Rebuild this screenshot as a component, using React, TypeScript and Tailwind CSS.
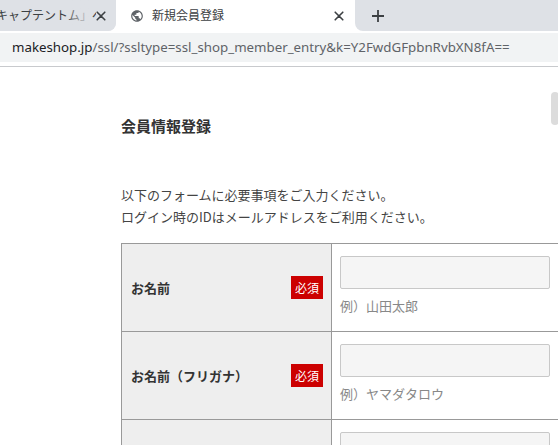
import React from 'react';

const rows = [
  { label: 'お名前', example: '例）山田太郎' },
  { label: 'お名前（フリガナ）', example: '例）ヤマダタロウ' },
];

const CloseIcon = () => (
  <svg width="10" height="10" viewBox="0 0 10 10" className="text-[#3c4043]">
    <path d="M1.2 1.2 L8.8 8.8 M8.8 1.2 L1.2 8.8" stroke="currentColor" strokeWidth="1.6" strokeLinecap="round" />
  </svg>
);

const GlobeIcon = () => (
  <svg width="14" height="14" viewBox="0 0 24 24">
    <path
      fill="#5f6368"
      d="M12 2C6.48 2 2 6.48 2 12s4.48 10 10 10 10-4.48 10-10S17.52 2 12 2zm-1 17.930c-3.950-.49-7-3.850-7-7.930 0-.62.08-1.210.21-1.790L9 15v1c0 1.100.9 2 2 2v1.930zm6.900-2.540c-.26-.81-1-1.390-1.900-1.390h-1v-3c0-.55-.45-1-1-1H8v-2h2c.55 0 1-.45 1-1V7h2c1.100 0 2-.9 2-2v-.41c2.930 1.190 5 4.060 5 7.410 0 2.080-.8 3.970-2.100 5.390z"
    />
  </svg>
);

export default function App() {
  return (
    <div className="relative w-[558px] h-[445px] overflow-hidden bg-white font-['Noto_Sans','Noto_Sans_CJK_JP',sans-serif]">
      {/* tab strip */}
      <div className="flex h-[31px] bg-white">
        <div className="relative w-[116px] bg-[#dee1e6] rounded-br-lg flex items-center overflow-hidden">
          <span className="ml-[-4px] whitespace-nowrap text-[12px] text-[#3c4043]">キャプテントム」への</span>
          <div className="absolute left-[64px] top-0 h-full w-[28px] bg-gradient-to-r from-transparent to-[#dee1e6]" />
          <div className="absolute left-[96px] top-0 h-full w-[20px] bg-[#dee1e6] rounded-br-lg flex items-center">
            <CloseIcon />
          </div>
        </div>
        <div className="w-[239px] flex items-center pl-[14px] pr-[11px]">
          <GlobeIcon />
          <span className="ml-[8px] flex-1 text-[12px] text-[#3c4043] whitespace-nowrap">新規会員登録</span>
          <CloseIcon />
        </div>
        <div className="flex-1 bg-[#dee1e6] rounded-bl-lg flex items-center pl-[16px]">
          <svg width="14" height="14" viewBox="0 0 14 14">
            <path d="M7 1 V13 M1 7 H13" stroke="#3c4043" strokeWidth="1.8" />
          </svg>
        </div>
      </div>

      {/* toolbar */}
      <div className="h-[36px] pt-[2px] border-b border-[#c8cacd]">
        <div className="h-[29px] bg-[#f1f3f4] flex items-center pl-[12px] text-[13.3px] whitespace-nowrap">
          <span className="text-[#202124]">makeshop.jp</span>
          <span className="text-[#5f6368]">/ssl/?ssltype=ssl_shop_member_entry&amp;k=Y2FwdGFpbnRvbXN8fA==</span>
        </div>
      </div>

      {/* scrollbar thumb */}
      <div className="absolute left-[551px] top-[92px] w-[8px] h-[33px] rounded-[4px] bg-[#dcdcdc]" />

      {/* page */}
      <div className="pl-[121px] pt-[48px] text-[#333] font-['Noto_Sans_CJK_JP','Noto_Sans',sans-serif]">
        <h1 className="text-[15px] leading-[22px] font-bold text-[#333]">会員情報登録</h1>

        <p className="mt-[47px] text-[13px] leading-[22px] text-[#444]">
          以下のフォームに必要事項をご入力ください。
          <br />
          ログイン時のIDはメールアドレスをご利用ください。
        </p>

        <div className="mt-[15px] w-[600px] border-t border-l border-[#999]">
          {rows.map((row) => (
            <div key={row.label} className="grid grid-cols-[210px_1fr] border-b border-[#999]">
              <div className="bg-[#eeeeee] border-r border-[#999] flex items-center justify-between pl-[9px] pr-[8px]">
                <span className="text-[13px] font-bold text-[#333]">{row.label}</span>
                <span className="w-[32px] h-[23px] bg-[#cc0000] text-white text-[12px] flex items-center justify-center">
                  必須
                </span>
              </div>
              <div className="pl-[8px] pt-[12px] pb-[15px]">
                <div className="w-[210px] h-[33px] bg-[#f5f5f5] border border-[#c8c8c8] rounded-[2px]" />
                <div className="mt-[7px] text-[13px] leading-[20px] text-[#888]">{row.example}</div>
              </div>
            </div>
          ))}
          <div className="grid grid-cols-[210px_1fr] h-[80px]">
            <div className="bg-[#eeeeee] border-r border-[#999]" />
            <div className="pl-[8px] pt-[12px]">
              <div className="w-[210px] h-[33px] bg-[#f5f5f5] border border-[#c8c8c8] rounded-[2px]" />
            </div>
          </div>
        </div>
      </div>
    </div>
  );
}
